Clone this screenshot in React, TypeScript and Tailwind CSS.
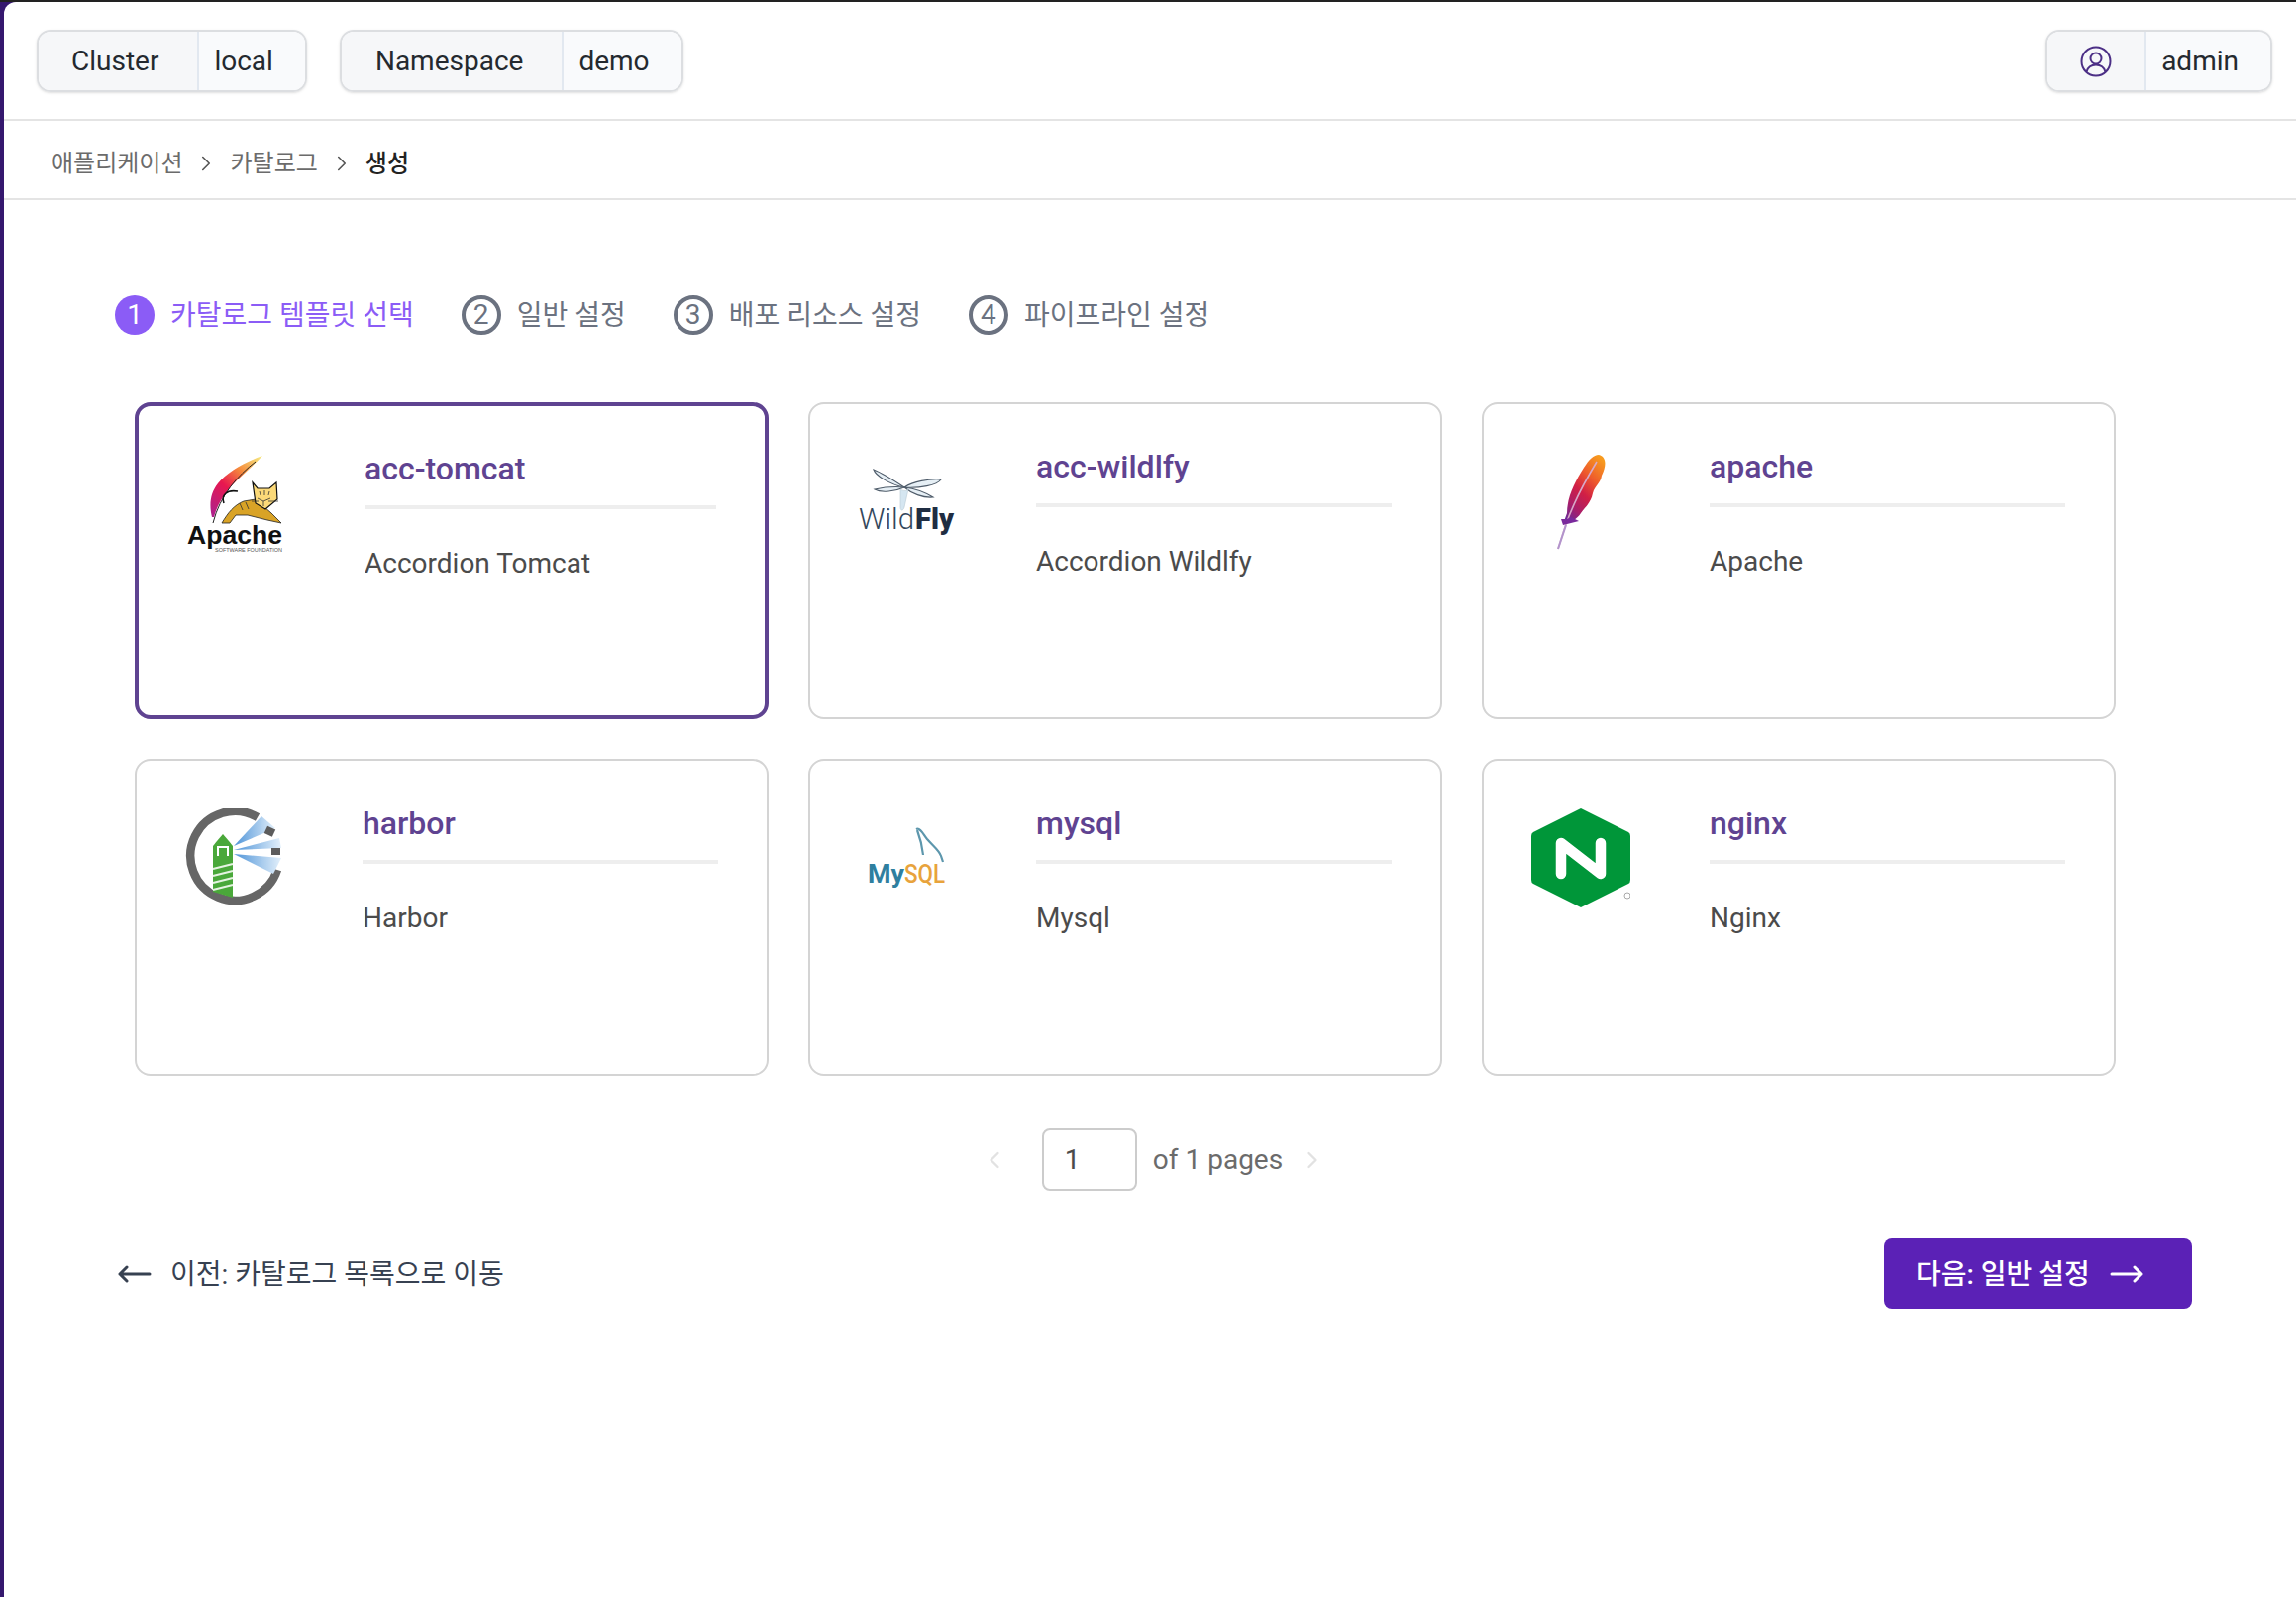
import { ChevronLeft, ChevronRight } from "lucide-react";

const font = "font-['Roboto','Noto_Sans_CJK_KR',sans-serif]";

function TomcatLogo() {
  return (
    <svg viewBox="0 0 100 100" className="w-[100px] h-[100px]">
      <defs>
        <linearGradient id="tomcat-feather" x1="0.9" y1="0" x2="0.1" y2="1">
          <stop offset="0" stopColor="#f6e27a" />
          <stop offset="0.3" stopColor="#f58a3c" />
          <stop offset="0.6" stopColor="#e8174f" />
          <stop offset="1" stopColor="#b0208a" />
        </linearGradient>
      </defs>
      <path d="M77 2C60 8 42 18 32 30C24 40 23 52 26 64L28 64C31 52 38 41 47 31C57 21 70 10 77 2Z" fill="url(#tomcat-feather)" />
      <path d="M70 8C52 22 34 42 27 70" fill="none" stroke="#222" strokeWidth="1" />
      <path d="M36 70C42 60 48 52 58 48L70 46L86 60L96 70L82 67L62 62L50 62L44 70Z" fill="#d9a326" stroke="#222" strokeWidth="0.8" />
      <path d="M67 29L72 35L84 35L91 29L92 46L80 56L70 50Z" fill="#fbd978" stroke="#111" strokeWidth="1.2" />
      <path d="M38 50C35 42 41 36 52 38" fill="none" stroke="#111" strokeWidth="1.6" />
      <path d="M72 45L78 48L85 45M78 48L78 53M66 48L73 48M83 48L93 48M74 38L75 42M79 37L79 42M84 38L83 42M54 50L57 57M60 49L63 56" fill="none" stroke="#333" strokeWidth="0.8" />
      <text x="1" y="91" textLength="96" lengthAdjust="spacingAndGlyphs" fill="#111" fontFamily="Liberation Sans" fontWeight="700" fontSize="25">Apache</text>
      <text x="29" y="99" textLength="68" lengthAdjust="spacingAndGlyphs" fill="#555" fontFamily="Liberation Sans" fontSize="5">SOFTWARE FOUNDATION</text>
    </svg>
  );
}

function WildflyLogo() {
  return (
    <svg viewBox="0 0 100 100" className="w-[100px] h-[100px]">
      <g fill="#e6eff5" stroke="#4f5c6a" strokeWidth="1.1">
        <path d="M47 36C38 30 26 22 16 18C18 24 32 33 47 36Z" />
        <path d="M47 36C56 30 72 27 84 28C80 34 62 37 47 36Z" />
        <path d="M47 36C38 35 26 36 17 38C24 42 38 40 47 36Z" />
        <path d="M47 36C56 37 68 41 76 46C66 47 54 42 47 36Z" />
      </g>
      <path d="M43 38C46 40 50 40 51 38L47 56C46 60 43 60 43 56Z" fill="#d5e6f1" stroke="#b9c9d4" strokeWidth="0.6" />
      <text x="1" y="78" textLength="56" lengthAdjust="spacingAndGlyphs" fill="#33475b" fontFamily="Roboto" fontWeight="300" fontSize="30">Wild</text>
      <text x="58" y="78" textLength="39" lengthAdjust="spacingAndGlyphs" fill="#1f2d42" fontFamily="Roboto" fontWeight="900" fontSize="30">Fly</text>
    </svg>
  );
}

function FeatherLogo() {
  return (
    <svg viewBox="0 0 100 100" className="w-[100px] h-[100px]">
      <defs>
        <linearGradient id="apache-feather" x1="0.8" y1="0" x2="0.2" y2="1">
          <stop offset="0" stopColor="#f79a1f" />
          <stop offset="0.3" stopColor="#ee5a2c" />
          <stop offset="0.55" stopColor="#d11f45" />
          <stop offset="0.8" stopColor="#a81e6a" />
          <stop offset="1" stopColor="#6c2a97" />
        </linearGradient>
      </defs>
      <path d="M68 3C76 5 76 14 71 24C70 32 64 34 62 42C60 52 54 56 50 62C46 68 40 72 32 73L36 62C36 46 44 30 53 16C58 8 63 3 68 3Z" fill="url(#apache-feather)" />
      <path d="M66 10C54 30 42 52 34 76L27 98" fill="none" stroke="#d8a8c8" strokeWidth="1.6" />
      <path d="M36 68L30 68L32 74L48 70L40 66Z" fill="#7a2a9c" />
      <path d="M35 74L27 98" fill="none" stroke="#b294cc" strokeWidth="2" />
    </svg>
  );
}

function HarborLogo() {
  return (
    <svg viewBox="0 0 100 100" className="w-[100px] h-[100px]">
      <defs>
        <linearGradient id="harbor-beam" x1="0" y1="0" x2="1" y2="0">
          <stop offset="0" stopColor="#4f94d8" />
          <stop offset="1" stopColor="#e3f0fb" />
        </linearGradient>
      </defs>
      <path d="M74 9A45 45 0 1 0 94 62" fill="none" stroke="#666" strokeWidth="8.5" />
      <path d="M50 38L78 8L92 20Z" fill="url(#harbor-beam)" />
      <path d="M50 42L96 30L98 40Z" fill="url(#harbor-beam)" />
      <path d="M50 46L98 50L90 66Z" fill="url(#harbor-beam)" />
      <rect x="82" y="19" width="9" height="8" fill="#5c5c5c" transform="rotate(25 86 23)" />
      <rect x="88" y="40" width="9" height="7" fill="#5c5c5c" />
      <path d="M29 84L29 38L33 33L39 26L45 33L49 38L49 90Z" fill="#4aa83a" />
      <path d="M34 48V39H44V48" fill="none" stroke="#fff" strokeWidth="2" />
      <path d="M29 61L49 56M29 68L49 63M29 75L49 70M29 82L49 77" stroke="#e6f3e2" strokeWidth="2" />
    </svg>
  );
}

function MysqlLogo() {
  return (
    <svg viewBox="0 0 100 100" className="w-[100px] h-[100px]">
      <path d="M59 21C63 19 66 26 70 31C76 38 82 42 84 48L86 54M60 22C63 30 65 38 66 47" fill="none" stroke="#5d97ad" strokeWidth="2.2" />
      <text x="10" y="75" textLength="37" lengthAdjust="spacingAndGlyphs" fill="#2f7f9f" fontFamily="Roboto" fontWeight="700" fontSize="26">My</text>
      <text x="47" y="75" textLength="41" lengthAdjust="spacingAndGlyphs" fill="#e8a33c" fontFamily="Roboto" fontWeight="500" fontSize="26">SQL</text>
    </svg>
  );
}

function NginxLogo() {
  return (
    <svg viewBox="0 0 100 100" className="w-[100px] h-[100px]">
      <path d="M50 0L98 24Q100 25 100 28V72Q100 75 98 76L50 100L2 76Q0 75 0 72V28Q0 25 2 24Z" fill="#009639" />
      <path d="M30 66V35L70 66V35" fill="none" stroke="#fff" strokeWidth="10.5" strokeLinecap="round" strokeLinejoin="round" />
      <circle cx="97" cy="88" r="3" fill="none" stroke="#aaa" strokeWidth="1" />
    </svg>
  );
}

const cards = [
  { name: "acc-tomcat", desc: "Accordion Tomcat", Logo: TomcatLogo, selected: true },
  { name: "acc-wildlfy", desc: "Accordion Wildlfy", Logo: WildflyLogo, selected: false },
  { name: "apache", desc: "Apache", Logo: FeatherLogo, selected: false },
  { name: "harbor", desc: "Harbor", Logo: HarborLogo, selected: false },
  { name: "mysql", desc: "Mysql", Logo: MysqlLogo, selected: false },
  { name: "nginx", desc: "Nginx", Logo: NginxLogo, selected: false },
];

const steps = ["카탈로그 템플릿 선택", "일반 설정", "배포 리소스 설정", "파이프라인 설정"];

function Pill({ label, value, labelClass }: { label: React.ReactNode; value: string; labelClass: string }) {
  return (
    <div className="flex h-[63px] items-stretch rounded-[14px] border-2 border-[#dcdee1] shadow-sm text-[28px] text-[#24292f] overflow-hidden">
      <div className={`flex items-center bg-[#f6f7f9] border-r-2 border-[#e2e8f0] pt-[1px] ${labelClass}`}>{label}</div>
      <div className="flex items-center pl-[15px] pr-[32px] pt-[1px] bg-[#f9fafc]">{value}</div>
    </div>
  );
}

export default function App() {
  return (
    <div className={`min-h-[1612px] bg-[#35186e] flex flex-col ${font}`}>
      <div className="h-[2px] bg-[#222222]" />
      <div className="flex-1 ml-[4px] bg-white rounded-tl-xl">
        <header className="h-[120px] flex items-center justify-between pl-[33px] pr-[24px] pt-[1px] border-b-2 border-[#e4e4e4]">
          <div className="flex gap-[33px]">
            <Pill label="Cluster" value="local" labelClass="pl-[33px] pr-[39px]" />
            <Pill label="Namespace" value="demo" labelClass="pl-[34px] pr-[39px]" />
          </div>
          <Pill
            label={
              <svg viewBox="0 0 32 32" className="w-[32px] h-[32px]" fill="none" stroke="#4c2f86" strokeWidth="2">
                <circle cx="16" cy="16" r="14.5" />
                <circle cx="16" cy="13" r="5.5" />
                <path d="M6.5 26.5C8 21.5 11.5 19.5 16 19.5S24 21.5 25.5 26.5" />
              </svg>
            }
            value="admin"
            labelClass="px-[33px]"
          />
        </header>
        <nav className="h-[80px] flex items-center pl-[48px] pt-[7px] border-b-2 border-[#e4e4e4] text-[24px] text-[#6b6b6b]">
          <span>애플리케이션</span>
          <ChevronRight className="w-[26px] h-[26px] mx-[11px] text-[#555]" strokeWidth={1.5} />
          <span>카탈로그</span>
          <ChevronRight className="w-[26px] h-[26px] mx-[11px] text-[#555]" strokeWidth={1.5} />
          <span className="text-[#222] font-medium">생성</span>
        </nav>
        <main>
          <div className="flex gap-[48px] ml-[112px] mt-[94px] text-[28px] text-[#6b7280]">
            {steps.map((step, i) => (
              <div key={step} className={`flex items-center gap-[16px] ${i === 0 ? "text-[#8b5cf6]" : ""}`}>
                <span
                  className={
                    i === 0
                      ? "w-[40px] h-[40px] rounded-full bg-[#8b5cf6] text-white flex items-center justify-center"
                      : "w-[40px] h-[40px] rounded-full border-4 border-[#6b7280] flex items-center justify-center"
                  }
                >
                  {i + 1}
                </span>
                <span className="pt-[2px]">{step}</span>
              </div>
            ))}
          </div>
          <div className="grid grid-cols-[repeat(3,640px)] gap-x-[40px] gap-y-[40px] ml-[132px] mt-[66px]">
            {cards.map(({ name, desc, Logo, selected }) => (
              <div
                key={name}
                className={`h-[320px] flex items-start pl-[48px] rounded-[16px] ${
                  selected ? "border-4 border-[#5f4391]" : "border-2 border-[#d4d4d4]"
                }`}
              >
                <div className="mt-[48px] mr-[80px] shrink-0">
                  <Logo />
                </div>
                <div className="flex-1 pt-[43px] pr-[49px]">
                  <div className="h-[40px] leading-[40px] text-[32px] font-medium text-[#5f4391]">{name}</div>
                  <div className="h-[4px] bg-[#eeeeee] mt-[17px]" />
                  <div className="h-[40px] leading-[40px] mt-[35px] text-[28px] text-[#4b4b4b]">{desc}</div>
                </div>
              </div>
            ))}
          </div>
          <div className="flex items-center justify-center mt-[53px] ml-[7px] text-[28px] text-[#6b6b6b]">
            <ChevronLeft className="w-[28px] h-[28px] text-[#e2e2e2] mr-[34px]" strokeWidth={2} />
            <div className="w-[96px] h-[63px] rounded-[8px] border-2 border-[#cccccc] flex items-center pl-[21px] text-[#4b4b4b]">1</div>
            <span className="ml-[16px] mr-[16px]">of 1 pages</span>
            <ChevronRight className="w-[28px] h-[28px] text-[#e2e2e2]" strokeWidth={2} />
          </div>
          <div className="flex items-center justify-between ml-[115px] w-[2094px] mt-[48px]">
            <div className="flex items-center gap-[19px] text-[28px] text-[#374151]">
              <svg viewBox="0 0 34 20" className="w-[34px] h-[20px]" fill="none" stroke="#374151" strokeWidth="3" strokeLinecap="round" strokeLinejoin="round">
                <path d="M32 10H2M9 3L2 10L9 17" />
              </svg>
              <span className="pt-[3px]">이전: 카탈로그 목록으로 이동</span>
            </div>
            <button className="h-[71px] w-[311px] rounded-[8px] bg-[#5b21b6] text-white text-[28px] font-medium flex items-center justify-start pl-[32px] gap-[20px]">
              <span className="pt-[2px]">다음: 일반 설정</span>
              <svg viewBox="0 0 34 20" className="w-[34px] h-[20px]" fill="none" stroke="#ffffff" strokeWidth="3" strokeLinecap="round" strokeLinejoin="round">
                <path d="M2 10H32M25 3L32 10L25 17" />
              </svg>
            </button>
          </div>
        </main>
      </div>
    </div>
  );
}
